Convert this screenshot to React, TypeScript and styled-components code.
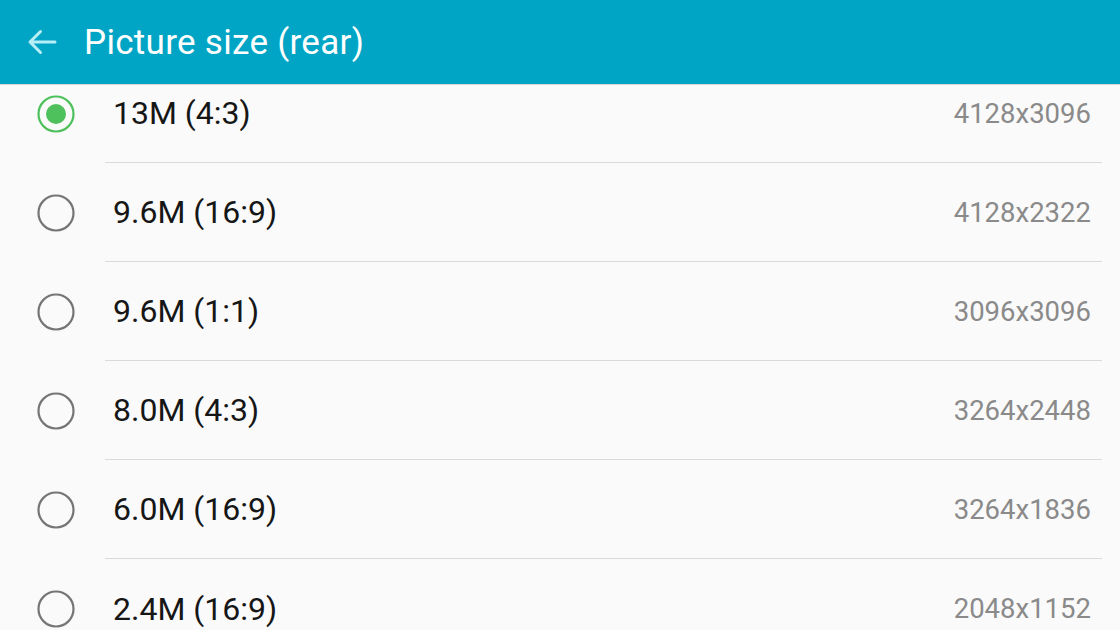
import React from "react";
import styled, { createGlobalStyle } from "styled-components";

const GlobalStyle = createGlobalStyle`
  html, body {
    margin: 0;
    padding: 0;
    background: #fafafa;
    font-family: Roboto, "Noto Sans", sans-serif;
  }
`;

const Screen = styled.div`
  width: 1120px;
  height: 630px;
  display: flex;
  flex-direction: column;
  overflow: hidden;
  background: #fafafa;
`;

const Header = styled.header`
  height: 84px;
  flex-shrink: 0;
  background: #00a5c5;
  border-bottom: 1px solid #d6d6d6;
  display: flex;
  align-items: center;
  padding-left: 25px;
  gap: 25px;
  position: relative;
  z-index: 1;
`;

const Title = styled.h1`
  margin: 0;
  font-weight: 400;
  font-size: 35px;
  color: #ffffff;
  letter-spacing: 0.3px;
`;

const ListArea = styled.div`
  flex: 1;
  overflow: hidden;
`;

// the list is scrolled a little, so the first row sits partly under the header
const List = styled.ul`
  list-style: none;
  margin: -21px 0 0;
  padding: 0;
`;

const Row = styled.li`
  height: 99px;
  display: flex;
  align-items: center;
`;

const RadioCell = styled.div`
  width: 105px;
  flex-shrink: 0;
  display: flex;
  padding-left: 36px;
  box-sizing: border-box;
`;

const Body = styled.div<{ last?: boolean }>`
  flex: 1;
  height: 100%;
  display: flex;
  align-items: center;
  justify-content: space-between;
  margin-right: 18px;
  padding: 0 11px 0 8px;
  box-sizing: border-box;
  border-bottom: ${(p) => (p.last ? "none" : "1.5px solid #dadada")};
`;

const Label = styled.span`
  font-size: 32px;
  color: #161616;
`;

const Resolution = styled.span`
  font-size: 27.5px;
  color: #8a8a8a;
`;

const Radio = ({ checked }: { checked: boolean }) => (
  <svg width="40" height="40" viewBox="0 0 40 40">
    <circle
      cx="20"
      cy="20"
      r="17.5"
      fill="none"
      stroke={checked ? "#4fc15c" : "#757575"}
      strokeWidth="2.2"
    />
    {checked && <circle cx="20" cy="20" r="10" fill="#4fc15c" />}
  </svg>
);

const BackArrow = () => (
  <svg width="34" height="34" viewBox="0 0 34 34">
    <path
      d="M30 17H5M15.5 6.5L5 17l10.5 10.5"
      fill="none"
      stroke="#b8eef6"
      strokeWidth="3"
      strokeLinecap="round"
      strokeLinejoin="round"
    />
  </svg>
);

const sizes = [
  { label: "13M (4:3)", res: "4128x3096" },
  { label: "9.6M (16:9)", res: "4128x2322" },
  { label: "9.6M (1:1)", res: "3096x3096" },
  { label: "8.0M (4:3)", res: "3264x2448" },
  { label: "6.0M (16:9)", res: "3264x1836" },
  { label: "2.4M (16:9)", res: "2048x1152" },
];

export default function App() {
  return (
    <Screen>
      <GlobalStyle />
      <Header>
        <BackArrow />
        <Title>Picture size (rear)</Title>
      </Header>
      <ListArea>
        <List>
          {sizes.map((s, i) => (
            <Row key={s.label}>
              <RadioCell>
                <Radio checked={i === 0} />
              </RadioCell>
              <Body last={i === sizes.length - 1}>
                <Label>{s.label}</Label>
                <Resolution>{s.res}</Resolution>
              </Body>
            </Row>
          ))}
        </List>
      </ListArea>
    </Screen>
  );
}
